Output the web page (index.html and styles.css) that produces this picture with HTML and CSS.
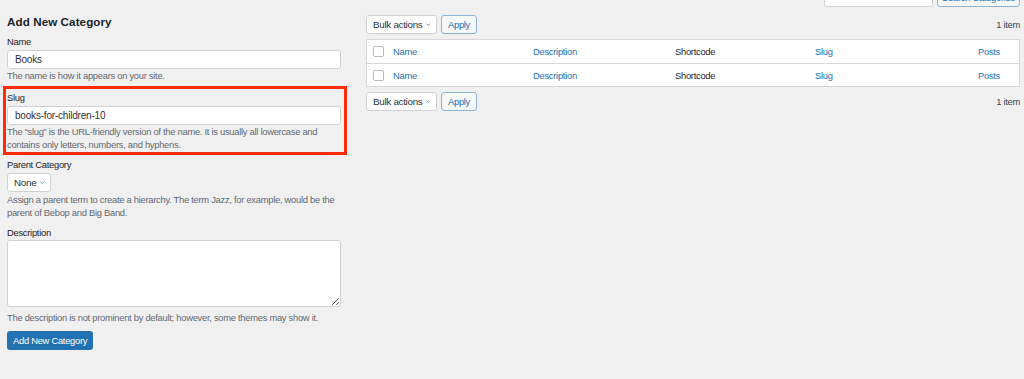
FILE: index.html
```html
<!DOCTYPE html>
<html>
<head>
<meta charset="utf-8">
<link rel="stylesheet" href="styles.css">
</head>
<body>
<div class="page">
  <div class="col-left">
    <h2 class="title">Add New Category</h2>
    <div class="field field-name">
      <label class="lbl">Name</label>
      <input class="txt" type="text" value="Books">
      <p class="help">The name is how it appears on your site.</p>
    </div>
    <div class="field field-slug">
      <label class="lbl">Slug</label>
      <input class="txt" type="text" value="books-for-children-10">
      <p class="help">The “slug” is the URL-friendly version of the name. It is usually all lowercase and contains only letters, numbers, and hyphens.</p>
    </div>
    <div class="field field-parent">
      <label class="lbl">Parent Category</label>
      <div class="sel sel-none"><span>None</span><svg class="chev" viewBox="0 0 10 6" width="8" height="5"><path d="M1 1l4 4 4-4" fill="none" stroke="#3c434a" stroke-width="1.3"/></svg></div>
      <p class="help">Assign a parent term to create a hierarchy. The term Jazz, for example, would be the parent of Bebop and Big Band.</p>
    </div>
    <div class="field field-desc">
      <label class="lbl">Description</label>
      <textarea class="area"></textarea>
      <p class="help">The description is not prominent by default; however, some themes may show it.</p>
    </div>
    <div class="btn-primary">Add New Category</div>
  </div>
  <div class="col-right">
    <div class="search-row">
      <input class="search-box" type="text">
      <div class="btn-sec btn-search">Search Categories</div>
    </div>
    <div class="tablenav">
      <div class="sel sel-bulk"><span>Bulk actions</span><svg class="chev" viewBox="0 0 10 6" width="8" height="5"><path d="M1 1l4 4 4-4" fill="none" stroke="#3c434a" stroke-width="1.3"/></svg></div>
      <div class="btn-sec btn-apply">Apply</div>
      <div class="count">1 item</div>
    </div>
    <div class="table">
      <div class="row">
        <div class="cb"><span class="box"></span></div>
        <a class="link">Name</a>
        <a class="link">Description</a>
        <span class="plain">Shortcode</span>
        <a class="link">Slug</a>
        <a class="link posts">Posts</a>
      </div>
      <div class="row">
        <div class="cb"><span class="box"></span></div>
        <a class="link">Name</a>
        <a class="link">Description</a>
        <span class="plain">Shortcode</span>
        <a class="link">Slug</a>
        <a class="link posts">Posts</a>
      </div>
    </div>
    <div class="tablenav tablenav-bottom">
      <div class="sel sel-bulk"><span>Bulk actions</span><svg class="chev" viewBox="0 0 10 6" width="8" height="5"><path d="M1 1l4 4 4-4" fill="none" stroke="#3c434a" stroke-width="1.3"/></svg></div>
      <div class="btn-sec btn-apply">Apply</div>
      <div class="count">1 item</div>
    </div>
  </div>
</div>
</body>
</html>
```
FILE: styles.css
```css
* { box-sizing: border-box; }
html, body { margin: 0; padding: 0; }
body {
  background: #f0f0f1;
  font-family: "Liberation Sans", Arial, sans-serif;
  font-size: 9.4px;
  letter-spacing: -0.28px;
  color: #3c434a;
  height: 379px;
  overflow: hidden;
}
.page {
  display: flex;
  gap: 25px;
  padding-left: 7px;
}
.col-left { width: 334px; flex: none; }
.col-right { width: 654px; flex: none; }

.title {
  margin: 0;
  padding-top: 15px;
  font-size: 11.6px;
  letter-spacing: 0.1px;
  line-height: 14px;
  font-weight: 700;
  color: #1d2327;
}
.lbl {
  display: block;
  line-height: 14px;
  color: #1d2327;
  margin-bottom: 1px;
}
.txt {
  display: block;
  width: 100%;
  height: 19px;
  margin: 0;
  border: 1px solid #d0d1d4;
  border-radius: 3px;
  background: #fff;
  padding: 0 7px;
  font: inherit;
  font-size: 10px;
  letter-spacing: -0.2px;
  color: #2c3338;
  outline: none;
}
.help {
  margin: 0;
  line-height: 13px;
  color: #646970;
}
.field-name { margin-top: 6px; }
.field-slug {
  margin: 4px -6px 0 -4px;
  padding: 2px 3px 1px 1px;
  border: 3px solid #ff2a0a;
}
.field-parent { margin-top: 3px; }
.field-desc { margin-top: 7px; }
.field-desc .lbl { margin-bottom: 0; }

.sel {
  display: inline-flex;
  align-items: center;
  height: 19px;
  border: 1px solid #d0d1d4;
  border-radius: 3px;
  background: #fff;
  color: #2c3338;
  padding: 0 5px 0 6px;
  gap: 4px;
  white-space: nowrap;
  font-size: 9.8px;
}
.sel-none { width: 44px; margin-bottom: 1px; }
.sel-bulk { width: 71px; justify-content: space-between; }
.chev { display: block; }

.area {
  display: block;
  width: 100%;
  height: 67px;
  margin: 0;
  border: 1px solid #d0d1d4;
  border-radius: 3px;
  background: #fff;
  resize: vertical;
  font: inherit;
}
.field-desc .help { margin-top: 4px; }

.btn-primary {
  display: inline-flex;
  align-items: center;
  margin-top: 7px;
  height: 19px;
  padding: 0 6px;
  background: #2271b1;
  border-radius: 3px;
  color: #fff;
  white-space: nowrap;
}

.search-row {
  display: flex;
  justify-content: flex-end;
  gap: 4px;
  margin-top: -13px;
  height: 20px;
}
.search-box {
  width: 109px;
  height: 20px;
  border: 1px solid #d0d1d4;
  border-radius: 3px;
  background: #fff;
  margin: 0;
}
.btn-sec {
  display: inline-flex;
  align-items: center;
  height: 19px;
  padding: 0 6px;
  border: 1px solid #8fb3d6;
  border-radius: 3px;
  background: #f6f7f7;
  color: #2271b1;
  white-space: nowrap;
}
.btn-search { height: 20px; width: 83px; justify-content: center; padding: 0; align-items: flex-end; padding-bottom: 3px; }

.tablenav {
  display: flex;
  align-items: center;
  gap: 4px;
  margin-top: 8px;
}
.btn-apply { width: 36px; justify-content: center; padding: 0; }
.count { margin-left: auto; color: #3c434a; }
.tablenav-bottom { margin-top: 5px; }

.table {
  margin-top: 5px;
  border: 1px solid #d6d7da;
  background: #fff;
}
.row {
  display: grid;
  grid-template-columns: 26px 140px 142px 140px 1fr auto;
  align-items: center;
  height: 23px;
}
.row + .row { border-top: 1px solid #d6d7da; }
.cb { padding-left: 6px; display: flex; }
.box {
  width: 11px;
  height: 11px;
  border: 1px solid #b8babd;
  border-radius: 2px;
  background: #fff;
}
.link { color: #2271b1; text-decoration: none; }
.plain { color: #1d2327; }
.posts { padding-right: 19px; }
```
